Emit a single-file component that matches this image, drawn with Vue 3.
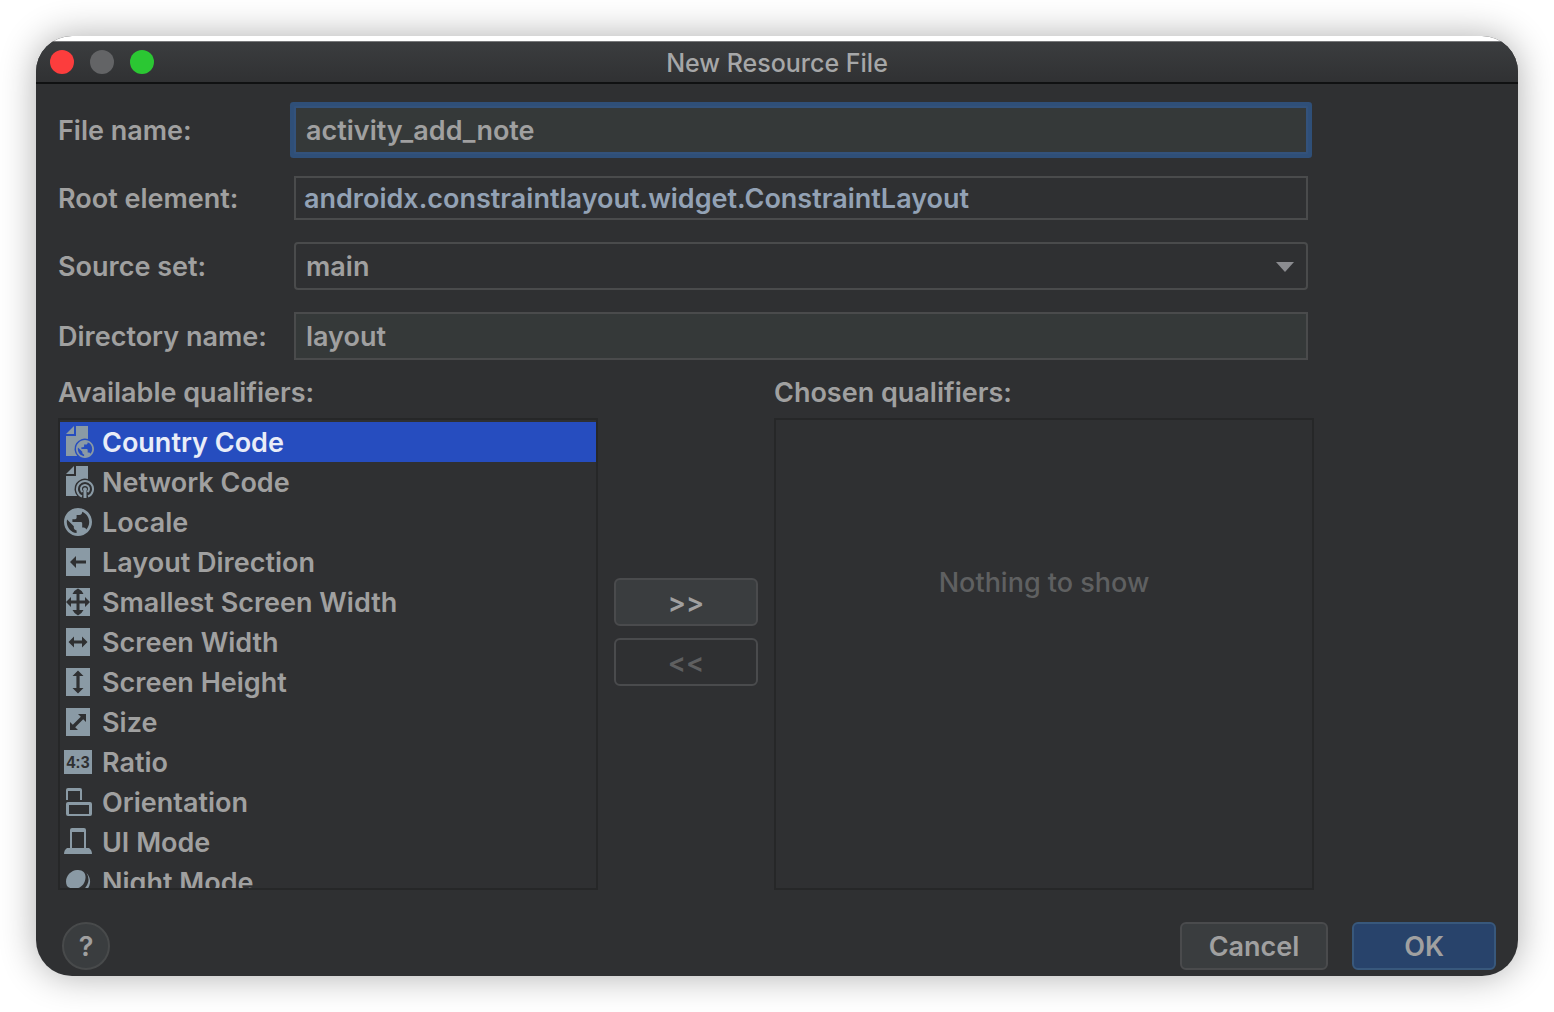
<script setup>
import { ref } from 'vue'

const fileName = ref('activity_add_note')
const rootElement = ref('androidx.constraintlayout.widget.ConstraintLayout')
const sourceSet = ref('main')
const directoryName = ref('layout')
const selected = ref('country')

const qualifiers = [
  { id: 'country', label: 'Country Code' },
  { id: 'network', label: 'Network Code' },
  { id: 'locale', label: 'Locale' },
  { id: 'direction', label: 'Layout Direction' },
  { id: 'smallest', label: 'Smallest Screen Width' },
  { id: 'width', label: 'Screen Width' },
  { id: 'height', label: 'Screen Height' },
  { id: 'size', label: 'Size' },
  { id: 'ratio', label: 'Ratio' },
  { id: 'orientation', label: 'Orientation' },
  { id: 'uimode', label: 'UI Mode' },
  { id: 'night', label: 'Night Mode' },
]

const globe =
  'M12 2C6.48 2 2 6.48 2 12s4.48 10 10 10 10-4.48 10-10S17.52 2 12 2zm-1 17.93c-3.95-.49-7-3.85-7-7.93 0-.62.08-1.21.21-1.79L9 15v1c0 1.1.9 2 2 2v1.93zm6.9-2.54c-.26-.81-1-1.39-1.9-1.39h-1v-3c0-.55-.45-1-1-1H8v-2h2c.55 0 1-.45 1-1V7h2c1.1 0 2-.9 2-2v-.41c2.93 1.19 5 4.06 5 7.41 0 2.08-.8 3.97-2.1 5.39z'
const page = 'M14 0H26V12.9A10.5 10.5 0 0 0 15.2 30H4V10H14ZM12 0V8H4Z'

// Arrow glyphs cut out of the 24x28 tile
const tileArrows = {
  direction: 'M8 16L14 10V14.4H24V17.6H14V22Z',
  smallest:
    'M16 2.5Q19.5 4 21.5 8H17.5V14.5H23V11L28 16L23 21V17.5H17.5V24H21.5Q19.5 28 16 29.5Q12.5 28 10.5 24H14.5V17.5H9V21L4 16L9 11V14.5H14.5V8H10.5Q12.5 4 16 2.5Z',
  width: 'M6.5 16L12 10.5V14.4H20V10.5L25.5 16L20 21.5V17.6H12V21.5Z',
  height: 'M16 4.5L21.5 10H17.6V22H21.5L16 27.5L10.5 22H14.4V10H10.5Z',
  size: 'M24 8V16L21.2 13.2L13.2 21.2L16 24H8V16L10.8 18.8L18.8 10.8L16 8Z',
}
</script>

<template>
  <main class="stage">
    <form class="window" @submit.prevent>
      <header class="titlebar">
        <div class="lights">
          <button type="button" class="light close" aria-label="Close"></button>
          <button type="button" class="light minimize" aria-label="Minimize" disabled></button>
          <button type="button" class="light expand" aria-label="Zoom"></button>
        </div>
        <h1 class="title">New Resource File</h1>
      </header>

      <div class="content">
        <div class="fields">
          <label for="file-name">File name:</label>
          <input id="file-name" v-model="fileName" class="field focused" type="text" spellcheck="false" />

          <label for="root-element">Root element:</label>
          <input id="root-element" v-model="rootElement" class="field code" type="text" spellcheck="false" />

          <label for="source-set">Source set:</label>
          <div class="select-wrap">
            <select id="source-set" v-model="sourceSet" class="field select">
              <option>main</option>
            </select>
            <svg class="arrow" viewBox="0 0 18 10" aria-hidden="true"><path d="M0 0H18L9 10Z" /></svg>
          </div>

          <label for="directory-name">Directory name:</label>
          <input id="directory-name" v-model="directoryName" class="field" type="text" spellcheck="false" />
        </div>

        <div class="chooser">
          <section class="column">
            <h2 id="available" class="caption">Available qualifiers:</h2>
            <ul class="list" role="listbox" aria-labelledby="available">
              <li
                v-for="q in qualifiers"
                :key="q.id"
                class="item"
                :class="{ selected: q.id === selected }"
                role="option"
                :aria-selected="q.id === selected"
                @click="selected = q.id"
              >
                <svg class="icon" viewBox="0 0 32 32" aria-hidden="true">
                  <template v-if="q.id === 'country'">
                    <path :d="page" />
                    <path :d="globe" transform="translate(12.2 12.2) scale(.9)" />
                  </template>
                  <template v-else-if="q.id === 'network'">
                    <path :d="page" />
                    <g class="line">
                      <path d="M20 30.5A8 8 0 1 1 26 30.5" />
                      <path d="M20.5 26A4 4 0 1 1 25.5 26" />
                    </g>
                    <path d="M23 21.5a1.8 1.8 0 0 1 1.5 3V32h-3V24.5a1.8 1.8 0 0 1 1.5-3Z" />
                  </template>
                  <path v-else-if="q.id === 'locale'" :d="globe" transform="translate(-.8 -.8) scale(1.4)" />
                  <template v-else-if="tileArrows[q.id]">
                    <path d="M4 2H28V30H4Z" />
                    <path class="cut" :d="tileArrows[q.id]" />
                  </template>
                  <template v-else-if="q.id === 'ratio'">
                    <path d="M2 4H30V28H2Z" />
                    <text class="cut ratio" x="16" y="22" text-anchor="middle">4:3</text>
                  </template>
                  <template v-else-if="q.id === 'orientation'">
                    <path d="M4 14V4Q4 2 6 2H18Q20 2 20 4V14H18V5H6V14Z" />
                    <path fill-rule="evenodd" d="M6 16H28Q30 16 30 18V28Q30 30 28 30H6Q4 30 4 28V18Q4 16 6 16ZM7 19V28H27V19Z" />
                  </template>
                  <template v-else-if="q.id === 'uimode'">
                    <path fill-rule="evenodd" d="M8 22V4Q8 2 10 2H22Q24 2 24 4V22H27Q30 24 30 28H2Q2 24 5 22ZM10 6V22H22V6Z" />
                  </template>
                  <template v-else>
                    <path d="M15 4C21 3.5 24 7 23.5 12C23 18 19 22 14 22.5C10 23 7 22 5 20C1.5 12 8 4.5 15 4Z" />
                    <path d="M24.5 7A12 12 0 0 1 22 26L20.5 24A12 12 0 0 0 24.5 7Z" />
                  </template>
                </svg>
                <span class="name">{{ q.label }}</span>
              </li>
            </ul>
          </section>

          <div class="movers">
            <button type="button" class="button">&gt;&gt;</button>
            <button type="button" class="button" disabled>&lt;&lt;</button>
          </div>

          <section class="column">
            <h2 class="caption">Chosen qualifiers:</h2>
            <div class="list empty"><p>Nothing to show</p></div>
          </section>
        </div>
      </div>

      <footer class="footer">
        <button type="button" class="help" aria-label="Help">?</button>
        <div class="actions">
          <button type="button" class="button cancel">Cancel</button>
          <button type="submit" class="button primary">OK</button>
        </div>
      </footer>
    </form>
  </main>
</template>

<style>
body {
  margin: 0;
  background: #fff;
}
</style>

<style scoped>
.stage {
  padding: 36px;
  font: 600 27px/30px Inter, "Liberation Sans", sans-serif;
  color: #a0a0a0;
}
.window {
  overflow: hidden;
  border-radius: 36px;
  background: #2f3032;
  box-shadow: 0 0 36px rgba(0, 0, 0, 0.32);
}
input,
select,
button {
  box-sizing: border-box;
  margin: 0;
  font: inherit;
  color: inherit;
  outline: none;
}
h1,
h2,
p,
ul {
  margin: 0;
  padding: 0;
  font: inherit;
  list-style: none;
}
.titlebar {
  display: grid;
  grid-template-columns: 1fr auto 1fr;
  align-items: center;
  height: 41px;
  padding: 0 14px;
  border-top: 5px solid #fff;
  border-bottom: 2px solid #101112;
  background: linear-gradient(#3b3d3f, #303133) padding-box;
  box-shadow: inset 0 1px #77787a;
}
.lights {
  display: flex;
  gap: 16px;
}
.light {
  width: 24px;
  height: 24px;
  padding: 0;
  border: 0;
  border-radius: 50%;
}
.close {
  background: #fc3d3d;
}
.minimize {
  background: #636466;
}
.expand {
  background: #2bc733;
}
.title {
  padding-top: 2px;
  font-size: 25px;
  font-weight: 500;
  color: #a6a7a8;
}
.content {
  padding: 22px 204px 0 22px;
}
.fields {
  display: grid;
  grid-template-columns: 236px 1fr;
  row-gap: 22px;
  align-items: center;
  padding-right: 6px;
}
label,
.name {
  padding-top: 2px;
}
.field {
  display: block;
  width: 100%;
  height: 48px;
  padding: 0 10px;
  border: 2px solid #4a4b4c;
  background: #353939;
}
.focused {
  border-color: #33527b;
  border-radius: 1px;
  box-shadow: 0 0 0 4px #2f4f78;
}
.code {
  height: 44px;
  padding: 0 8px;
  background: #2f3032;
  color: #93a2b5;
}
.select-wrap {
  position: relative;
}
.select {
  appearance: none;
  padding-top: 2px;
  border-radius: 4px;
  background: #2f3032;
}
.arrow {
  position: absolute;
  top: 20px;
  right: 14px;
  width: 18px;
  height: 10px;
  fill: #8b8c90;
  pointer-events: none;
}
.chooser {
  display: grid;
  grid-template-columns: 1fr 144px 1fr;
  gap: 16px;
  margin-top: 18px;
}
.caption {
  margin-bottom: 10px;
}
.list {
  box-sizing: border-box;
  height: 472px;
  padding-top: 2px;
  overflow: hidden;
  border: 2px solid #262728;
}
.item {
  display: flex;
  align-items: center;
  gap: 8px;
  height: 40px;
  padding-left: 2px;
}
.selected {
  background: #264dbf;
  color: #e9edf8;
}
.icon {
  width: 32px;
  height: 32px;
  fill: #8a9aa5;
}
.line {
  fill: none;
  stroke: #8a9aa5;
  stroke-width: 2;
}
.cut {
  fill: #2f3032;
}
.ratio {
  font: 700 16px "Liberation Sans Narrow", "Liberation Sans", sans-serif;
}
.movers {
  display: flex;
  flex-direction: column;
  gap: 12px;
  padding-top: 200px;
}
.button {
  height: 48px;
  min-width: 144px;
  padding: 2px 0 0;
  border: 2px solid #4a4b4d;
  border-radius: 6px;
  background: #3a3d3f;
}
.button:disabled {
  background: none;
  color: #5e5f60;
}
.empty {
  padding-top: 148px;
  text-align: center;
  font-weight: 500;
  color: #5f6061;
}
.footer {
  display: flex;
  justify-content: space-between;
  align-items: center;
  padding: 32px 22px 6px 26px;
}
.help {
  width: 48px;
  height: 48px;
  padding: 2px 0 0;
  border: 2px solid #484a4b;
  border-radius: 50%;
  background: #3a3d3f;
}
.actions {
  display: flex;
  gap: 24px;
}
.cancel {
  width: 148px;
}
.primary {
  border-color: #38587c;
  background: #28436b;
}
</style>
